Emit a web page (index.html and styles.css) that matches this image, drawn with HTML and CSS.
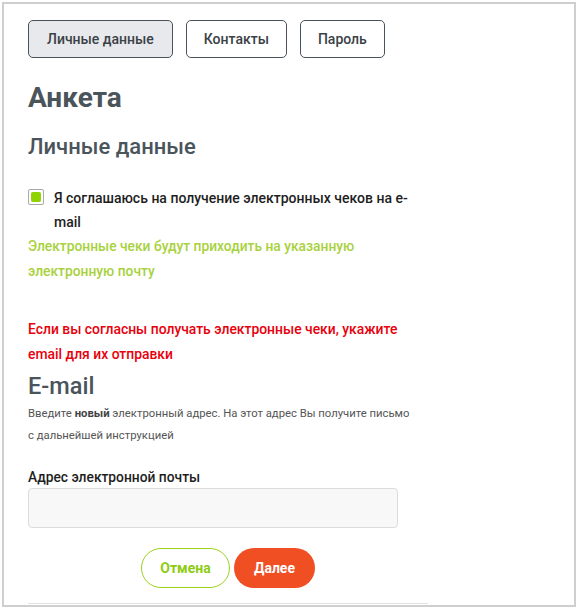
FILE: index.html
```html
<!DOCTYPE html>
<html lang="ru">
<head>
<meta charset="utf-8">
<link rel="stylesheet" href="styles.css">
</head>
<body>
<div class="frame">
  <div class="content">
    <nav class="tabs">
      <button class="tab active">Личные данные</button>
      <button class="tab">Контакты</button>
      <button class="tab">Пароль</button>
    </nav>
    <h1 class="title">Анкета</h1>
    <h2 class="subtitle">Личные данные</h2>
    <div class="form">
      <label class="check">
        <span class="box"><span class="mark"></span></span>
        <span class="check-text">Я соглашаюсь на получение электронных чеков на e-mail</span>
      </label>
      <p class="note-green">Электронные чеки будут приходить на указанную электронную почту</p>
      <p class="note-red">Если вы согласны получать электронные чеки, укажите email для их отправки</p>
      <h3 class="section">E-mail</h3>
      <p class="desc">Введите <strong class="strong">новый</strong> электронный адрес. На этот адрес Вы получите письмо с дальнейшей инструкцией</p>
      <div class="field-label">Адрес электронной почты</div>
      <div class="input"></div>
      <div class="actions">
        <button class="btn cancel">Отмена</button>
        <button class="btn next">Далее</button>
      </div>
      <div class="rule"></div>
    </div>
  </div>
</div>
</body>
</html>
```
FILE: styles.css
```css
html, body {
  margin: 0;
  padding: 0;
  background: #fff;
}
body {
  font-family: Roboto, "Noto Sans", Arial, sans-serif;
  color: #222;
}
.frame {
  margin: 2px 3px 2px 2px;
  height: 605px;
  box-sizing: border-box;
  border: 2px solid #cfcfcf;
  overflow: hidden;
}
.content {
  padding: 16px 0 0 24px;
}
.tabs {
  display: flex;
  gap: 13px;
}
.tab {
  font-family: inherit;
  height: 38px;
  padding: 0 17px;
  font-size: 14px;
  font-weight: 500;
  color: #3a4147;
  background: #fff;
  border: 1px solid #49525a;
  border-radius: 5px;
}
.tab.active {
  background: #e8e9ec;
  padding: 0 18px;
}
.title {
  margin: 20px 0 0;
  font-size: 28px;
  line-height: 40px;
  font-weight: 700;
  color: #4a545b;
}
.subtitle {
  margin: 14px 0 0;
  font-size: 22px;
  line-height: 30px;
  font-weight: 500;
  color: #4a545b;
}
.form {
  width: 400px;
}
.check {
  display: flex;
  align-items: flex-start;
  margin-top: 24px;
}
.box {
  flex: none;
  width: 14px;
  height: 14px;
  border: 1px solid #a9a9a9;
  border-radius: 2px;
  margin-top: 3px;
  display: flex;
  align-items: center;
  justify-content: center;
}
.mark {
  width: 10px;
  height: 10px;
  border-radius: 2px;
  background: #8fd400;
}
.check-text {
  margin-left: 10px;
  font-size: 14px;
  line-height: 24px;
  font-weight: 500;
  color: #1e1e1e;
  width: 374px;
}
.note-green {
  margin: 0;
  font-size: 13.8px;
  line-height: 25px;
  font-weight: 500;
  color: #a8d13e;
}
.note-red {
  margin: 33px 0 0;
  font-size: 13.9px;
  line-height: 25px;
  font-weight: 500;
  color: #e8000c;
}
.section {
  margin: 4px 0 0;
  font-size: 23.5px;
  line-height: 30px;
  font-weight: 500;
  color: #4a545b;
}
.desc {
  margin: 2px 0 0;
  width: 385px;
  font-size: 11.3px;
  line-height: 22px;
  color: #555;
}
.strong {
  font-weight: 700;
  color: #444;
}
.field-label {
  margin-top: 20px;
  font-size: 13.8px;
  line-height: 20px;
  font-weight: 500;
  color: #1e1e1e;
}
.input {
  margin-top: 1px;
  width: 370px;
  height: 40px;
  box-sizing: border-box;
  background: #f8f8f8;
  border: 1px solid #dcdcdc;
  border-radius: 4px;
}
.actions {
  display: flex;
  justify-content: center;
  gap: 4px;
  margin-top: 20px;
}
.btn {
  font-family: inherit;
  height: 40px;
  border-radius: 20px;
  font-size: 14px;
  font-weight: 700;
  padding: 0;
}
.cancel {
  width: 89px;
  background: #fff;
  color: #8dcc14;
  border: 1px solid #9ad21e;
}
.next {
  width: 81px;
  background: #f04e23;
  color: #fff;
  border: none;
}
.rule {
  margin-top: 15px;
  height: 1px;
  background: #e2e2e2;
}
```
